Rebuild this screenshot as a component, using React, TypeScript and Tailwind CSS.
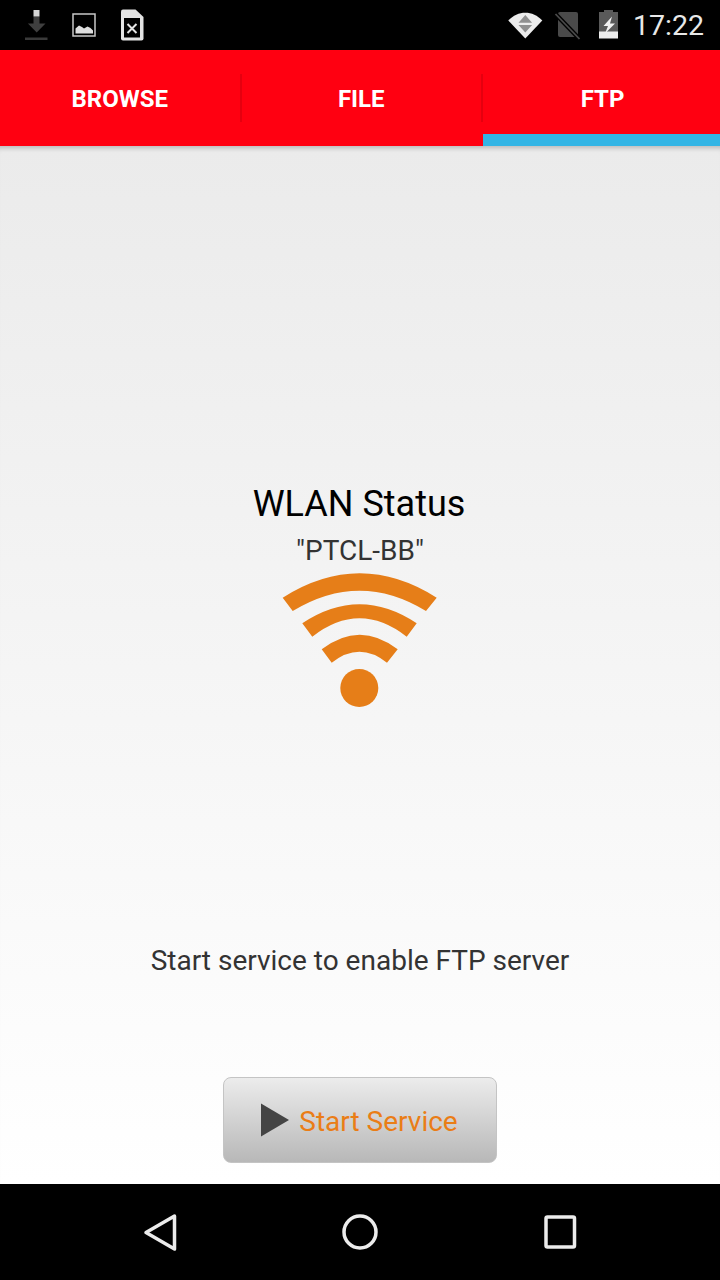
const font = { fontFamily: "Roboto, sans-serif" };

const StatusBar = () => (
  <div className="flex h-[50px] items-center justify-between bg-black">
    <div className="flex items-center">
      <svg width="160" height="50" viewBox="0 0 160 50">
        {/* download */}
        <path d="M33.5 16.5h6v7h6l-8.8 9-8.8-9h5.600z" fill="#3f3f3f" />
        <rect x="33.500" y="10" width="6" height="6.500" fill="#d6d6d6" />
        <rect x="25" y="37.500" width="22.500" height="2.500" fill="#3a3a3a" />
        {/* picture */}
        <rect x="73" y="14" width="22" height="22" fill="none" stroke="#c8c8c8" strokeWidth="1.500" />
        <path d="M75.500 33.500v-5l3.500-3 3 1.500 2 1.500 3.500-2 3 1.500 2.500 2.500v3z" fill="#dedede" />
        {/* sd card error */}
        <path d="M123 9.500h12.500l8 7.500v21.500a2 2 0 0 1-2 2h-18.500a2 2 0 0 1-2-2v-27a2 2 0 0 1 2-2z" fill="#e4e4e4" />
        <rect x="124" y="18" width="16" height="19.500" fill="#000" />
        <path d="M127.500 24l9 9m0-9l-9 9" stroke="#e4e4e4" strokeWidth="2" fill="none" />
      </svg>
    </div>
    <div className="flex items-center">
      <svg width="120" height="50" viewBox="500 0 120 50">
        {/* wifi */}
        <path d="M509.300 20.500c9.500-10.500 24.500-10.500 34 0l-17 18z" fill="#ececec" />
        <path d="M526.300 15l6.800 7.700h-13.600zM519.500 25h13.600l-6.800 7.500z" fill="#8f8f8f" />
        {/* no sim */}
        <path d="M561 12h16a2 2 0 0 1 2 2v21a2 2 0 0 1-2 2h-16a2 2 0 0 1-2-2v-21a2 2 0 0 1 2-2z" fill="#4a4a4a" />
        <path d="M556.500 14l24 25" stroke="#000" strokeWidth="4.500" fill="none" />
        <path d="M556.500 14l24 25" stroke="#4a4a4a" strokeWidth="1.800" fill="none" />
        {/* battery charging */}
        <path d="M605 12v-2h9v2h5v26h-19v-26z" fill="#5a5a5a" />
        <path d="M600 31.500h19v7h-19z" fill="#ececec" />
        <path d="M613 16.500L604.500 26H609L606 33.500 616 23.500H611z" fill="#f2f2f2" />
      </svg>
      <span className="mt-[1px] mr-[16px] ml-[14px] text-[28.500px] leading-[34px] text-[#e8e8e8]" style={font}>
        17:22
      </span>
    </div>
  </div>
);

const Tab = ({ label, active, divider }: { label: string; active?: boolean; divider?: boolean }) => (
  <div className={`relative flex items-start justify-center ${divider ? "w-[241.500px] pr-[2px]" : "flex-1 pl-[2px]"}`}>
    <span className="mt-[33px] text-[24px] leading-[32px] font-bold text-white" style={font}>
      {label}
    </span>
    {divider && <div className="absolute top-[24px] right-0 h-[48px] w-[2px] bg-[#e5000f]" />}
    {active && <div className="absolute inset-x-0 bottom-0 h-[12px] bg-[#33b5e5]" />}
  </div>
);

const WifiIcon = () => (
  <svg width="200" height="160" viewBox="0 0 200 160" className="shrink-0">
    <g fill="#e67e18">
      <path d="M22.700 37.700Q99.700 -11.100 176.700 37.700L166 51Q99.700 10.400 32.700 51z" />
      <path d="M42.300 63.300Q99.500 25.300 156.700 63.300L146.700 76.700Q99.500 39.900 52.300 76.700z" />
      <path d="M61.700 89.300Q99.700 60.100 137.700 89.300L127 102.700Q99.500 80.700 71.700 102.700z" />
      <circle cx="99.300" cy="128" r="19" />
    </g>
  </svg>
);

const App = () => (
  <div className="flex h-[1280px] w-[720px] flex-col overflow-hidden bg-black" style={font}>
    <StatusBar />
    <div className="flex h-[96px] bg-[#ff0011]">
      <Tab label="BROWSE" divider />
      <Tab label="FILE" divider />
      <Tab label="FTP" active />
    </div>
    <div className="flex flex-1 flex-col items-center bg-gradient-to-b from-[#ebebeb] to-white shadow-[inset_0_6px_5px_-4px_rgba(0,0,0,0.22)]">
      <div className="mt-[337px] -ml-[2px] text-[36px] leading-[42px] text-black">WLAN Status</div>
      <div className="mt-[10px] text-[28px] leading-[32px] text-[#333333]">"PTCL-BB"</div>
      <div className="-mt-[7px]">
        <WifiIcon />
      </div>
      <div className="mt-[223px] text-[28px] leading-[36px] text-[#333333]">Start service to enable FTP server</div>
      <button className="mt-[98px] flex h-[86px] w-[274px] items-center justify-center gap-[9px] rounded-[8px] border border-[#c4c4c4] bg-gradient-to-b from-[#ececec] to-[#b8b8b8] pr-[1px]">
        <svg width="30" height="34" viewBox="0 0 30 34" className="-ml-[1px]">
          <path d="M1 0.500L29 17 1 33.500z" fill="#444444" />
        </svg>
        <span className="mt-[4px] text-[28px] leading-[36px] text-[#ea7d16]">Start Service</span>
      </button>
    </div>
    <div className="flex h-[96px] items-center justify-around bg-black">
      <svg width="720" height="96" viewBox="0 0 720 96">
        <path d="M174.500 32L146 48.500 174.500 65z" fill="none" stroke="#ececec" strokeWidth="3.500" strokeLinejoin="round" />
        <circle cx="360" cy="48" r="16" fill="none" stroke="#ececec" strokeWidth="3.500" />
        <rect x="546" y="33" width="28.500" height="30" rx="1.500" fill="none" stroke="#ececec" strokeWidth="3.500" />
      </svg>
    </div>
  </div>
);

export default App;
